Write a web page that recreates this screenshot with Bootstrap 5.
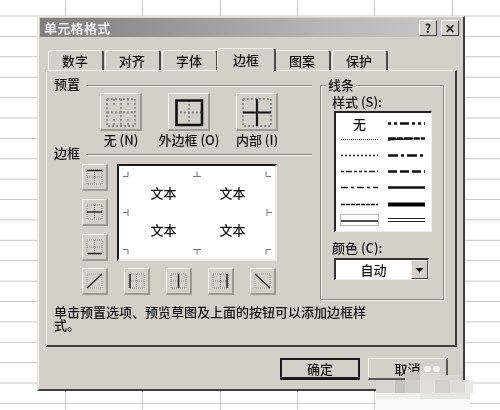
<!DOCTYPE html>
<html lang="zh"><head><meta charset="utf-8"><title>单元格格式</title>
<link href="https://cdn.jsdelivr.net/npm/bootstrap@5.3.0/dist/css/bootstrap.min.css" rel="stylesheet">
<style>
html,body{margin:0;width:500px;height:410px;overflow:hidden;background:#fff}
body{font-family:"Noto Sans CJK SC","Liberation Sans",sans-serif;font-size:13px;line-height:13px;color:#111;font-weight:500}
.sheet{position:relative;width:500px;height:410px;filter:blur(.4px);background-color:#fff;
 background-image:repeating-linear-gradient(to bottom,transparent 0,transparent 15.6px,#c6c6c6 15.6px,#c6c6c6 16.6px,transparent 16.6px,transparent 20.4px);background-size:500px 20.4px}
.vl{position:absolute;top:0;bottom:0;width:1px;background:#c6c6c6}
.dlg{position:absolute;left:37px;top:16px;width:428px;height:375px;background:#d4d0c8;border:solid;border-width:1px 2px 2px 2px;border-color:#ece9e2 #3f3f3f #3f3f3f #ece9e2;padding:1px 2px 0 1px}
.ttl{height:19px;background:linear-gradient(to right,#7e7e7e,#b9b9b9 70%,#c9c9c9);color:#f0f0f0;font-weight:700;padding:0 2px 0 4px}
.ttl-t{font-size:13px;letter-spacing:.3px;line-height:19px}
.cap{width:18px;height:16px;background:#d4d0c8;border:1px solid;border-color:#fff #404040 #404040 #fff;font-weight:700;font-size:12px;line-height:14px;text-align:center;color:#222;padding:0}
.tabs{padding-left:8px;margin-top:10px;border:0;height:23px;align-items:flex-end;flex-wrap:nowrap}
.tabs .nav-item{margin-right:1px;height:20px}
.tabs .nav-link{display:block;height:20px;padding:3px 14px 0 13px;margin:0;line-height:14px;color:#111;background:#d4d0c8;border:0;border-top:1px solid #f2f0ea;border-left:1px solid #f2f0ea;border-right:2px solid #4a4a4a;border-radius:3px 3px 0 0;font-size:13px}
.tabs .nav-item.on{height:23px;position:relative;z-index:2;margin:0 -1px -1px -2px}
.tabs .nav-item.on .nav-link{height:23px;padding:4px 15px 0 15px;background:#d4d0c8;color:#111;border-top-color:#f2f0ea;border-left-color:#f2f0ea;border-right-color:#4a4a4a}
.pane{margin-left:6px;width:411px;height:277px;border:solid;border-width:1px 2px 2px 1px;border-color:#f2f0ea #3d3d3d #3d3d3d #f2f0ea;padding:6px 0 0 7px}
.lft{width:258px}
.hd{height:13px}
.hd-s{width:26px;font-size:13px;white-space:nowrap}
.hd-l{margin:8px 0 0 6px;height:2px;border-top:1px solid #8b8882;border-bottom:1px solid #f4f2ec}
.pres{padding-left:33px;margin-top:3px;height:53px}
.pre{width:68px}
.tool.btn,.tool{display:block;padding:0;border-radius:0;background:#d4d0c8;border:solid;border-width:1px 2px 2px 1px;border-color:#f7f5f0 #9d9a93 #9d9a93 #f7f5f0;line-height:0}
.big{width:42px;height:38px}
.sm{width:26px;height:27px}
.pre-l{margin-top:2px;height:13px;white-space:nowrap;font-size:13px}
.prev-r{padding-left:28px;margin-top:5px;height:97px}
.sidec{width:26px;gap:8px}
.prv{position:relative;width:160px;height:97px;margin-left:9px;background:#fff;border:solid;border-width:2px;border-color:#1a1a1a #ece9e2 #ece9e2 #1a1a1a}
.prv-g{display:grid;grid-template-columns:69px 69px;grid-auto-rows:37px;padding:20px 0 0 10px;text-align:center;font-size:13px}
.tick{position:absolute;left:-2px;top:-2px}
.botr{padding-left:28px;margin-top:7px;gap:16px}
.grp{position:relative;width:124px;height:215px;margin:8px 0 0 8px;border:1px solid #8b8882;box-shadow:inset 1px 1px 0 #f4f2ec,1px 1px 0 #f4f2ec;padding:9px 0 0 13px}
.leg{position:absolute;left:5px;top:-8px;background:#d4d0c8;padding:0 2px;font-size:13px}
.lbl{height:14px;white-space:nowrap;font-size:13px;margin-left:-2px}
.lst{width:98px;height:121px;margin-top:2px;background:#fff;border:solid;border-width:2px 1px 1px 2px;border-color:#222 #eee #eee #222;display:grid;grid-template-columns:47px 47px;grid-auto-rows:16.2px;padding-top:2px}
.cel{display:flex;align-items:center;justify-content:center;font-size:13px}
.lbl2{margin-top:9px}
.sel{width:95px;height:22px;margin-top:3px;background:#fff;border:solid;border-width:2px 1px 1px 2px;border-color:#333 #eee #eee #333}
.sel-t{width:75px;text-align:center;line-height:19px;font-size:13px}
.sel-b{width:17px;height:19px;background:#d4d0c8;border:1px solid;border-color:#eee #444 #444 #eee;line-height:0}
.hlp{width:320px;margin-top:6px;line-height:12.5px;font-size:13px}
.acts{margin-top:11px;padding-right:13px;gap:8px}
.okb.btn{width:80px;height:22px;padding:0;border-radius:0;font-size:13px;font-weight:500;line-height:18px;color:#111;background:#d4d0c8;border:solid;border-width:1px 2px 2px 1px;border-color:#f4f2ec #555 #555 #f4f2ec}
.okb.df.btn{border:2px solid #1a1a1a;border-bottom-width:3px}
.wm{position:absolute;left:375px;top:365px}
</style></head><body>
<div class="sheet">
<span class="vl" style="left:65px"></span><span class="vl" style="left:142px"></span><span class="vl" style="left:220px"></span><span class="vl" style="left:297px"></span><span class="vl" style="left:374px"></span><span class="vl" style="left:452px"></span>
<div class="dlg d-flex flex-column">
 <div class="ttl d-flex align-items-center justify-content-between"><span class="ttl-t">单元格格式</span>
  <span class="d-flex gap-1"><span class="cap">?</span><span class="cap">✕</span></span></div>
 <ul class="nav nav-tabs tabs">
  <li class="nav-item"><a class="nav-link" href="#">数字</a></li>
  <li class="nav-item"><a class="nav-link" href="#">对齐</a></li>
  <li class="nav-item"><a class="nav-link" href="#">字体</a></li>
  <li class="nav-item on"><a class="nav-link active" href="#">边框</a></li>
  <li class="nav-item"><a class="nav-link" href="#">图案</a></li>
  <li class="nav-item"><a class="nav-link" href="#">保护</a></li>
 </ul>
 <div class="pane">
  <div class="d-flex">
   <div class="lft">
    <div class="hd d-flex"><span class="hd-s">预置</span><span class="hd-l flex-grow-1"></span></div>
    <div class="pres d-flex">
     <div class="pre d-flex flex-column align-items-center">
      <button class="btn tool big"><svg width="39" height="35" fill="none" stroke="#7f7f7f" stroke-width="1.8" stroke-dasharray="1.800 2.200"><path d="M6 5H34V32H6ZM6 18.500H34M20 5V32M13 5V12M27 5V12M13 25V32M27 25V32"/></svg></button>
      <span class="pre-l">无 (N)</span></div>
     <div class="pre d-flex flex-column align-items-center">
      <button class="btn tool big"><svg width="39" height="35" fill="none"><path d="M20 6V31M7 18.500H33" stroke="#7f7f7f" stroke-width="1.8" stroke-dasharray="1.800 2.200"/><path d="M7.500 6.500H33V31H7.500Z" stroke="#111" stroke-width="2.600"/></svg></button>
      <span class="pre-l">外边框 (O)</span></div>
     <div class="pre d-flex flex-column align-items-center">
      <button class="btn tool big"><svg width="39" height="35" fill="none"><path d="M6 5H34V32H6Z" stroke="#7f7f7f" stroke-width="1.8" stroke-dasharray="1.800 2.200"/><path d="M20 5V32M6 18.500H34" stroke="#111" stroke-width="2.200"/></svg></button>
      <span class="pre-l">内部 (I)</span></div>
    </div>
    <div class="hd d-flex"><span class="hd-s">边框</span><span class="hd-l flex-grow-1"></span></div>
    <div class="prev-r d-flex">
     <div class="sidec d-flex flex-column">
      <button class="btn tool sm"><svg width="23" height="24" fill="none"><path d="M4 5H19V19H4ZM4 12H19M11.500 5V19" stroke="#8a8a8a" stroke-dasharray="1 1"/><path d="M4 5.500H19" stroke="#222" stroke-width="1.400"/></svg></button>
      <button class="btn tool sm"><svg width="23" height="24" fill="none"><path d="M4 5H19V19H4ZM11.500 5V19" stroke="#8a8a8a" stroke-dasharray="1 1"/><path d="M4 12H19" stroke="#222" stroke-width="1.400"/></svg></button>
      <button class="btn tool sm"><svg width="23" height="24" fill="none"><path d="M4 5H19V19H4ZM4 12H19M11.500 5V19" stroke="#8a8a8a" stroke-dasharray="1 1"/><path d="M4 18.500H19" stroke="#222" stroke-width="1.400"/></svg></button>
     </div>
     <div class="prv">
      <svg class="tick" width="160" height="97" fill="none" stroke="#777"><path d="M6 12.500H11V7.500M80 7.500V12.500M76 12.500H84M149 7.500V12.500H154M6 48.500H11M11 45V52M150 48.500H155M150 45V52M6 85.500H11V90.500M76 85.500H84M80 85.500V90.500M154 85.500H149V90.500"/></svg>
      <div class="prv-g"><span>文本</span><span>文本</span><span>文本</span><span>文本</span></div>
     </div>
    </div>
    <div class="botr d-flex">
     <button class="btn tool sm"><svg width="23" height="24" fill="none"><path d="M4 5H19V19H4Z" stroke="#a0a0a0" stroke-dasharray="1 1"/><path d="M4 19L19 5" stroke="#222" stroke-width="1.200"/></svg></button>
     <button class="btn tool sm"><svg width="23" height="24" fill="none"><path d="M4 5H19V19H4ZM4 12H19M11.500 5V19" stroke="#8a8a8a" stroke-dasharray="1 1"/><path d="M5 5V19" stroke="#222" stroke-width="1.500"/></svg></button>
     <button class="btn tool sm"><svg width="23" height="24" fill="none"><path d="M4 5H19V19H4ZM4 12H19" stroke="#8a8a8a" stroke-dasharray="1 1"/><path d="M11.500 5V19" stroke="#222" stroke-width="1.500"/></svg></button>
     <button class="btn tool sm"><svg width="23" height="24" fill="none"><path d="M4 5H19V19H4ZM4 12H19M11.500 5V19" stroke="#8a8a8a" stroke-dasharray="1 1"/><path d="M18 5V19" stroke="#222" stroke-width="1.500"/></svg></button>
     <button class="btn tool sm"><svg width="23" height="24" fill="none"><path d="M4 5H19V19H4Z" stroke="#a0a0a0" stroke-dasharray="1 1"/><path d="M4 5L19 19" stroke="#222" stroke-width="1.200"/></svg></button>
    </div>
   </div>
   <div class="grp">
    <span class="leg">线条</span>
    <div class="lbl">样式 (S):</div>
    <div class="lst">
     <div class="cel">无</div>
     <div class="cel"><svg width="37" height="5"><path d="M0 2.500H37" stroke="#111" stroke-width="2.400" stroke-dasharray="3 3 3 3 9 3 3 3 3 3"/></svg></div>
     <div class="cel"><svg width="37" height="5"><path d="M0 2.500H37" stroke="#333" stroke-dasharray="1 1"/></svg></div>
     <div class="cel"><svg width="37" height="5"><path d="M0 3.500L1 1.500H37" stroke="#111" stroke-width="2.400" stroke-dasharray="9 1 6 1"/></svg></div>
     <div class="cel"><svg width="37" height="5"><path d="M0 2.500H37" stroke="#222" stroke-width="1.300" stroke-dasharray="2 2"/></svg></div>
     <div class="cel"><svg width="37" height="5"><path d="M0 2.500H37" stroke="#111" stroke-width="2.400" stroke-dasharray="10 3 3 3"/></svg></div>
     <div class="cel"><svg width="37" height="5"><path d="M0 2.500H37" stroke="#222" stroke-width="1.300" stroke-dasharray="3 2 6 2 3 2 3 2"/></svg></div>
     <div class="cel"><svg width="37" height="5"><path d="M0 2.500H37" stroke="#111" stroke-width="2.400" stroke-dasharray="9 3"/></svg></div>
     <div class="cel"><svg width="37" height="5"><path d="M0 2.500H37" stroke="#222" stroke-width="1.300" stroke-dasharray="7 3 3 3"/></svg></div>
     <div class="cel"><svg width="37" height="5"><path d="M0 2.500H37" stroke="#111" stroke-width="2.400"/></svg></div>
     <div class="cel"><svg width="37" height="5"><path d="M0 2.500H37" stroke="#111" stroke-width="1.300" stroke-dasharray="4 1"/></svg></div>
     <div class="cel"><svg width="37" height="5"><path d="M0 2.500H37" stroke="#000" stroke-width="4"/></svg></div>
     <div class="cel"><svg width="39" height="14" fill="none"><path d="M.5 1.500H38.500V12.500H.5Z" stroke="#777" stroke-dasharray="1 1"/><path d="M1 8H38" stroke="#111" stroke-width="1.500"/></svg></div>
     <div class="cel"><svg width="37" height="6" fill="none"><path d="M0 1.500H37M0 4.500H37" stroke="#222"/></svg></div>
    </div>
    <div class="lbl lbl2">颜色 (C):</div>
    <div class="sel d-flex align-items-start"><span class="sel-t">自动</span><span class="sel-b ms-auto"><svg width="15" height="17"><path d="M3.500 7H11.500L7.500 11.500Z" fill="#111"/></svg></span></div>
   </div>
  </div>
  <div class="hlp">单击预置选项、预览草图及上面的按钮可以添加边框样式。</div>
 </div>
 <div class="acts d-flex justify-content-end">
  <button class="btn okb df">确定</button><button class="btn okb">取消</button>
 </div>
</div>
<svg class="wm" width="100" height="45"><rect x="49" y="1" width="7" height="6" rx="3" fill="#f4f4f0"/><rect x="58" y="1" width="7" height="6" rx="3" fill="#f4f4f0"/>
<rect x="30" y="7" width="15" height="8" fill="#c9c6bf"/><rect x="45" y="8" width="20" height="7" fill="#dedcd8"/><rect x="65" y="10" width="20" height="5" fill="#d8d6d0"/>
<rect x="1" y="15" width="19" height="13" fill="#d9d6d0"/><rect x="20" y="15" width="10" height="13" fill="#c6c3bc"/><rect x="30" y="15" width="15" height="13" fill="#cfcfc9"/><rect x="45" y="15" width="15" height="13" fill="#e0dfdb"/><rect x="60" y="15" width="15" height="13" fill="#d5d2cc"/><rect x="75" y="15" width="15" height="13" fill="#dddcda"/><rect x="90" y="15" width="8" height="13" fill="#e8e8e6"/>
<rect x="1" y="28" width="44" height="6" fill="#eeeeec"/><rect x="45" y="28" width="50" height="6" fill="#e6e6e4"/>
<rect x="1" y="34" width="94" height="11" fill="#f9f9f9"/></svg>
</div>
</body></html>
